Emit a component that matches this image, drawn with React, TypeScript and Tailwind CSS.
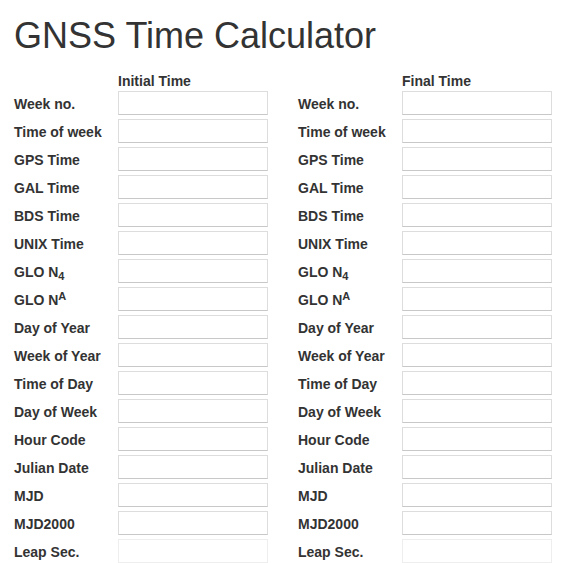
import React from 'react';

type Row = { key: string; label: React.ReactNode; disabled?: boolean };

const rows: Row[] = [
  { key: 'week', label: 'Week no.' },
  { key: 'tow', label: 'Time of week' },
  { key: 'gps', label: 'GPS Time' },
  { key: 'gal', label: 'GAL Time' },
  { key: 'bds', label: 'BDS Time' },
  { key: 'unix', label: 'UNIX Time' },
  {
    key: 'n4',
    label: (
      <>
        GLO N<sub className="text-[11px]">4</sub>
      </>
    ),
  },
  {
    key: 'na',
    label: (
      <>
        GLO N<sup className="text-[11px]">A</sup>
      </>
    ),
  },
  { key: 'doy', label: 'Day of Year' },
  { key: 'woy', label: 'Week of Year' },
  { key: 'tod', label: 'Time of Day' },
  { key: 'dow', label: 'Day of Week' },
  { key: 'hour', label: 'Hour Code' },
  { key: 'jd', label: 'Julian Date' },
  { key: 'mjd', label: 'MJD' },
  { key: 'mjd2000', label: 'MJD2000' },
  { key: 'leap', label: 'Leap Sec.', disabled: true },
];

const TimeInput = ({ disabled }: { disabled?: boolean }) => (
  <input
    type="text"
    disabled={disabled}
    className={
      disabled
        ? 'h-6 w-[150px] border border-[#eeeeee] bg-white outline-none'
        : 'h-6 w-[150px] border border-[#dddddd] border-b-[#c8c8c8] bg-white outline-none'
    }
  />
);

const App: React.FC = () => {
  return (
    <div
      className="bg-white px-[14px] text-[#333333]"
      style={{ fontFamily: '"Liberation Sans", Arial, sans-serif' }}
    >
      <h1 className="pt-[16px] text-[36px] leading-[40px] font-normal text-[#333333]">
        GNSS Time Calculator
      </h1>
      <div className="mt-[17px] grid grid-cols-[104px_150px_30px_104px_150px] text-[14px] font-bold">
        <div />
        <div className="h-[18px] leading-[16px]">Initial Time</div>
        <div />
        <div />
        <div className="h-[18px] leading-[16px]">Final Time</div>
        {rows.map((row) => (
          <React.Fragment key={row.key}>
            <div className="h-[28px] pt-px leading-[24px]">{row.label}</div>
            <div className="h-[28px]">
              <TimeInput disabled={row.disabled} />
            </div>
            <div />
            <div className="h-[28px] pt-px leading-[24px]">{row.label}</div>
            <div className="h-[28px]">
              <TimeInput disabled={row.disabled} />
            </div>
          </React.Fragment>
        ))}
      </div>
    </div>
  );
};

export default App;
